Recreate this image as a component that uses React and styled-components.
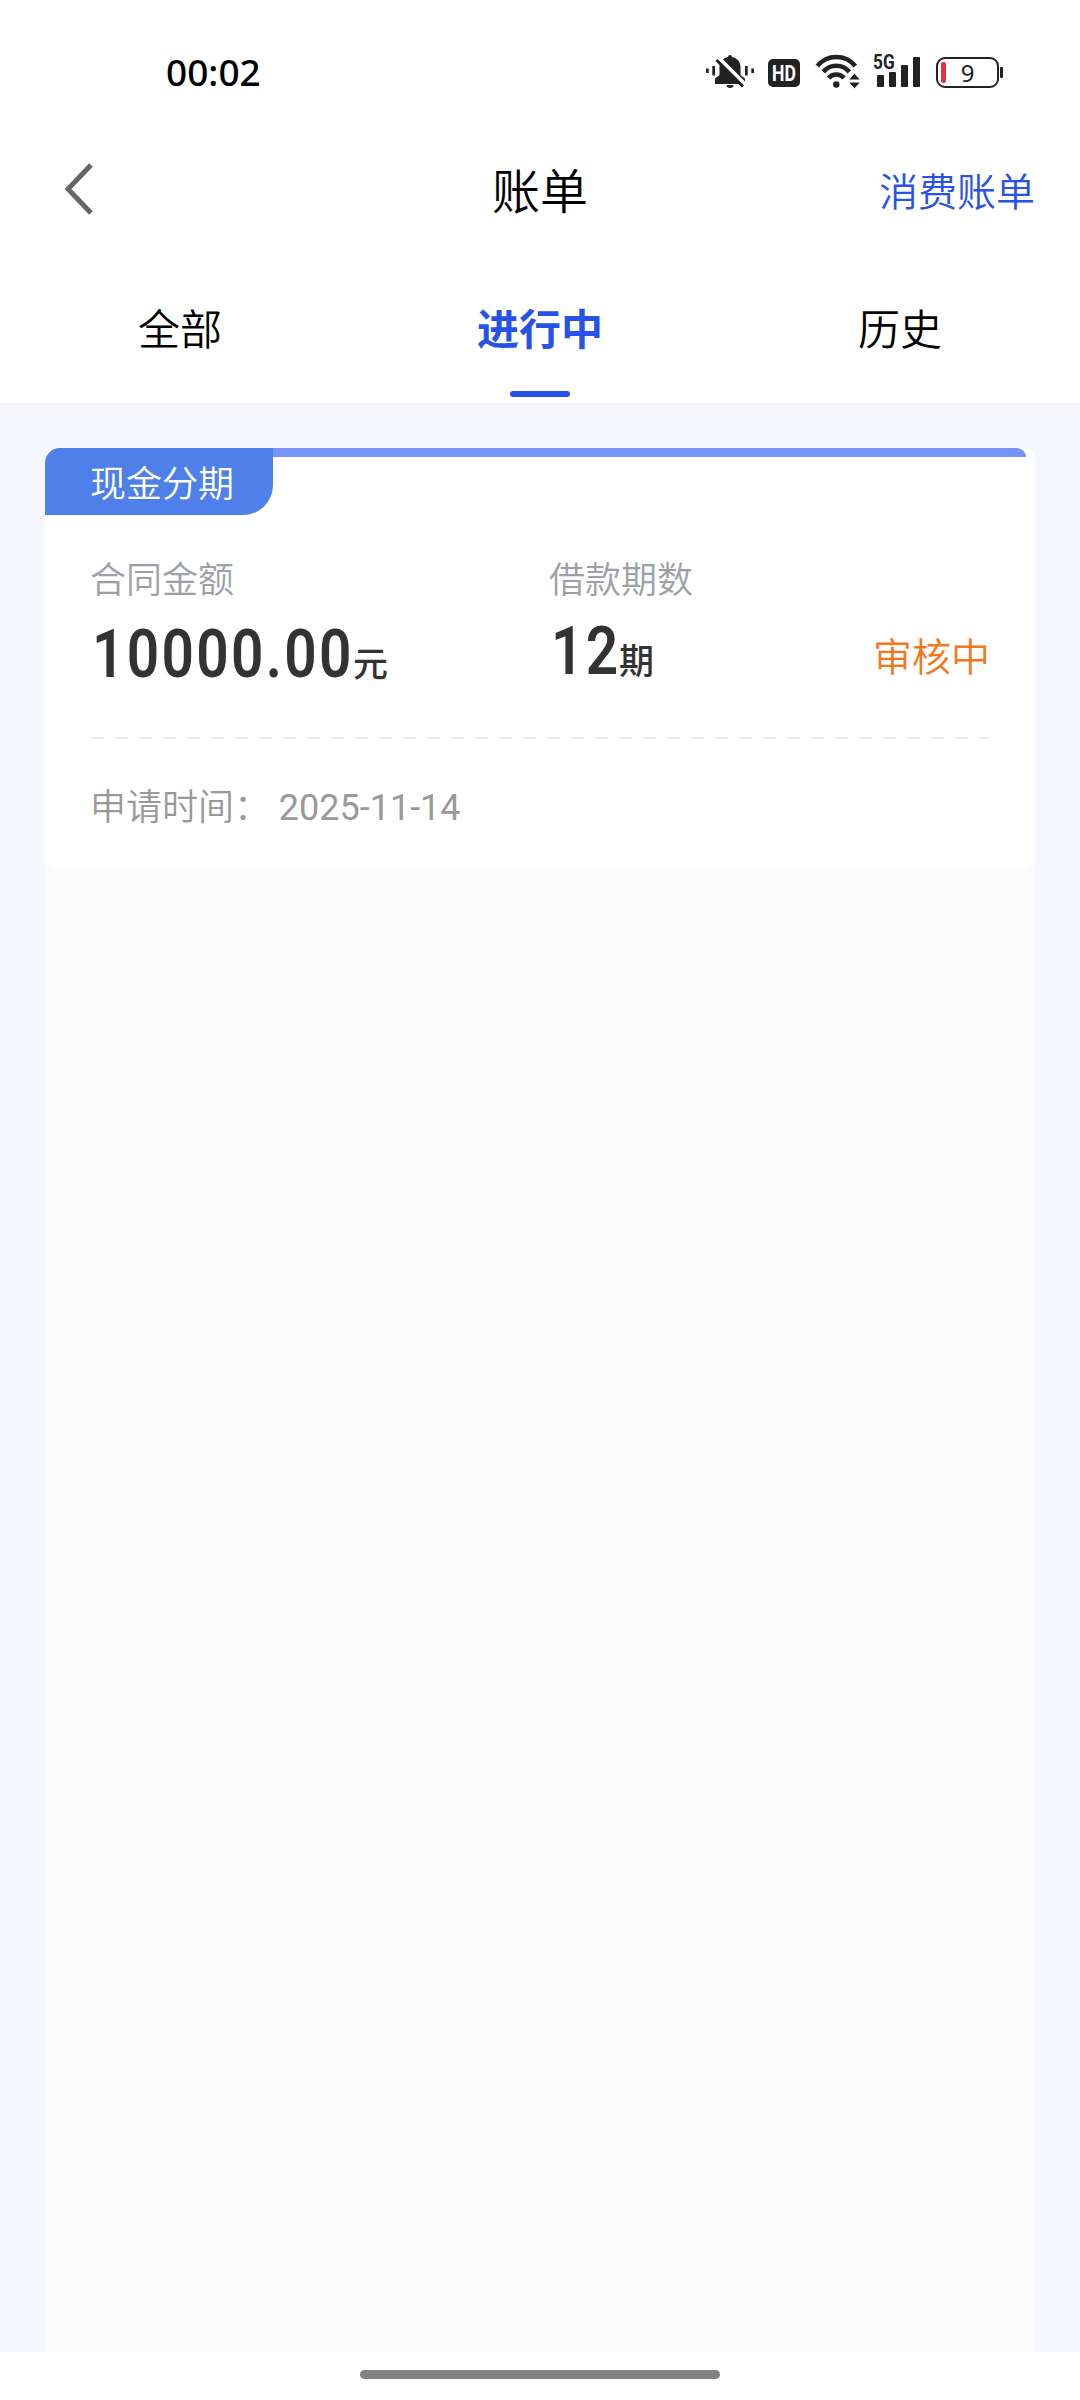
import styled, {createGlobalStyle} from "styled-components";

const tabs = ["全部", "进行中", "历史"];

const bills = [
  {
    type: "现金分期",
    amount: "10000.00",
    periods: "12",
    status: "审核中",
    date: "2025-11-14",
  },
];

function BellOffIcon() {
  return (
    <svg width="48" height="36" viewBox="0 0 48 36" fill="#222">
      <rect x="0" y="14.500" width="2.700" height="4.500" />
      <rect x="6.300" y="12" width="2.700" height="9.500" />
      <rect x="39" y="12" width="2.700" height="9.500" />
      <rect x="45.300" y="14.500" width="2.700" height="4.500" />
      <path d="M22 3a2 2 0 0 1 4 0c5 1 8.500 4.500 8.500 10v8l4.500 3.500V30H9v-5.500l4.500-3.500v-8c0-5.500 3.500-9 8.500-10z" />
      <path d="M20.500 31h7a3.500 3 0 0 1-7 0z" />
      <path d="M12 4l28 28" stroke="#fff" strokeWidth="5" fill="none" />
      <path d="M10.500 6l26.500 26.500" stroke="#222" strokeWidth="3" fill="none" />
    </svg>
  );
}

function WifiIcon() {
  return (
    <svg width="44" height="36" viewBox="0 0 44 36">
      <g fill="none" stroke="#222" strokeWidth="4.500">
        <path d="M2.300 12a24.600 24.600 0 0 1 38 0" />
        <path d="M8.300 18a16.500 16.500 0 0 1 26 0" />
        <path d="M13.500 24a10.300 10.300 0 0 1 15.600 0" />
      </g>
      <circle cx="21.300" cy="30.500" r="3.200" fill="#222" />
      <path
        d="M39.500 19l6 7h-12zM39.500 35l6-7h-12z"
        fill="#222"
        stroke="#fff"
        strokeWidth="1"
      />
    </svg>
  );
}

function BackIcon() {
  return (
    <svg width="30" height="52" viewBox="0 0 30 52">
      <path
        d="M27 2L4 26l23 24"
        fill="none"
        stroke="#666"
        strokeWidth="5"
      />
    </svg>
  );
}

export default function App() {
  return (
    <>
      <GlobalStyle />
      <Page lang="zh-CN">
        <StatusBar>
          <Clock>00:02</Clock>
          <StatusIcons>
            <BellOffIcon />
            <HdBadge>
              <span>HD</span>
            </HdBadge>
            <WifiIcon />
            <Signal>
              <SignalLabel>5G</SignalLabel>
              <SignalBar $height={12} />
              <SignalBar $height={15} />
              <SignalBar $height={22} />
              <SignalBar $height={30} />
            </Signal>
            <Battery>
              <BatteryBody>
                <BatteryLevel />
                <BatteryText>9</BatteryText>
              </BatteryBody>
              <BatteryTip />
            </Battery>
          </StatusIcons>
        </StatusBar>
        <NavBar>
          <BackButton aria-label="back">
            <BackIcon />
          </BackButton>
          <Title>账单</Title>
          <NavLink>消费账单</NavLink>
        </NavBar>
        <Tabs>
          {tabs.map((tab, i) => (
            <Tab key={tab} $active={i === 1}>
              {tab}
            </Tab>
          ))}
        </Tabs>
        <Content>
          <List>
            {bills.map(bill => (
              <Card key={bill.date}>
                <CardTop>
                  <Tag>{bill.type}</Tag>
                  <TopLine />
                </CardTop>
                <Summary>
                  <Field $width={459}>
                    <Label>合同金额</Label>
                    <Value>
                      <Digits $width={263}>
                        <span>{bill.amount}</span>
                      </Digits>
                      <Unit>元</Unit>
                    </Value>
                  </Field>
                  <Field>
                    <Label>借款期数</Label>
                    <Value $raised>
                      <Digits $width={70}>
                        <span>{bill.periods}</span>
                      </Digits>
                      <Unit>期</Unit>
                    </Value>
                  </Field>
                  <Status>{bill.status}</Status>
                </Summary>
                <Divider />
                <Footer>
                  申请时间： <time>{bill.date}</time>
                </Footer>
              </Card>
            ))}
          </List>
        </Content>
        <GestureBar>
          <GesturePill />
        </GestureBar>
      </Page>
    </>
  );
}

const GlobalStyle = createGlobalStyle`
  * {
    box-sizing: border-box;
  }
  body {
    margin: 0;
    background-color: #fff;
    font-family: Roboto, "Noto Sans CJK SC", sans-serif;
    font-weight: 350;
  }
`;

const Page = styled.div`
  display: flex;
  flex-direction: column;
  width: 1080px;
  height: 2400px;
  overflow: hidden;
`;

const StatusBar = styled.div`
  display: flex;
  justify-content: space-between;
  align-items: center;
  height: 144px;
  padding: 0 77px 0 166px;
`;

const Clock = styled.span`
  padding-bottom: 2px;
  font-family: "Noto Sans", sans-serif;
  font-size: 37px;
  font-weight: 460;
  color: #000;
`;

const StatusIcons = styled.div`
  display: flex;
  align-items: center;

  svg {
    overflow: visible;
  }
`;

const HdBadge = styled.span`
  display: flex;
  align-items: center;
  justify-content: center;
  width: 32px;
  height: 28px;
  margin: 2px 15px 0 14px;
  border-radius: 5px;
  background-color: #222;
  color: #fff;
  font-size: 22px;
  font-weight: 700;

  span {
    transform: scaleX(0.8);
  }
`;

const Signal = styled.div`
  position: relative;
  display: flex;
  align-items: flex-end;
  gap: 5px;
  height: 34px;
  margin-left: 18px;
  padding-bottom: 2px;
`;

const SignalLabel = styled.span`
  position: absolute;
  top: -4px;
  left: -4px;
  font-size: 21px;
  line-height: 22px;
  font-weight: 700;
  color: #222;
  transform: scaleX(0.82);
  transform-origin: left;
`;

const SignalBar = styled.span`
  width: 7px;
  height: ${props => props.$height}px;
  border-radius: 1px;
  background-color: #222;
`;

const Battery = styled.div`
  display: flex;
  align-items: center;
  gap: 1px;
  margin-left: 16px;
`;

const BatteryBody = styled.div`
  display: flex;
  align-items: center;
  width: 63px;
  height: 31px;
  padding-left: 3px;
  border: 2.5px solid #222;
  border-radius: 9px;
`;

const BatteryLevel = styled.span`
  width: 5px;
  height: 21px;
  border-radius: 2px;
  background-color: #dc3545;
`;

const BatteryText = styled.span`
  flex: 1;
  padding-right: 8px;
  font-family: "Noto Sans", sans-serif;
  font-size: 24px;
  line-height: 27px;
  font-weight: 400;
  text-align: center;
  color: #222;
`;

const BatteryTip = styled.span`
  width: 3px;
  height: 11px;
  border-radius: 1px;
  background-color: #222;
`;

const NavBar = styled.header`
  display: grid;
  grid-template-columns: 1fr auto 1fr;
  align-items: center;
  height: 96px;
  padding: 0 45px 8px;
`;

const BackButton = styled.button`
  display: flex;
  justify-self: start;
  padding: 2px 0 0 19px;
  border: none;
  background-color: transparent;
`;

const Title = styled.h1`
  margin: 0;
  font-size: 48px;
  font-weight: 350;
  color: #000;
`;

const NavLink = styled.a`
  justify-self: end;
  padding-top: 2px;
  font-size: 39px;
  color: #2752e7;
`;

const Tabs = styled.nav`
  display: flex;
  height: 163px;
`;

const Tab = styled.button`
  position: relative;
  flex: 1;
  padding: 10px 0 0;
  border: none;
  background-color: transparent;
  font-family: inherit;
  font-size: 42px;
  font-weight: ${props => (props.$active ? 700 : 350)};
  color: ${props => (props.$active ? "#2752e7" : "#000")};

  &::after {
    content: "";
    display: ${props => (props.$active ? "block" : "none")};
    position: absolute;
    left: 150px;
    bottom: 6px;
    width: 60px;
    height: 6px;
    border-radius: 3px;
    background-color: #2752e7;
  }
`;

const Content = styled.main`
  flex: 1;
  padding: 45px 45px 0;
  background-color: #f5f7fc;
`;

const List = styled.div`
  height: 100%;
  background-color: #fbfbfb;
  border-radius: 12px 12px 0 0;
`;

const Card = styled.article`
  height: 420px;
  border-radius: 12px;
  background-color: #fff;
`;

const CardTop = styled.div`
  display: flex;
  height: 67px;
  padding-right: 9px;
`;

const Tag = styled.span`
  width: 228px;
  padding: 4px 0 0 45px;
  border-radius: 15px 0 30px 0;
  background-color: #4f7fe9;
  font-size: 36px;
  line-height: 67px;
  color: #fff;
`;

const TopLine = styled.div`
  flex: 1;
  height: 9px;
  border-top-right-radius: 9px;
  background-color: #7594fb;
`;

const Summary = styled.div`
  display: flex;
  height: 222px;
  padding: 40px 45px 0;
`;

const Field = styled.div`
  width: ${props => (props.$width ? props.$width + "px" : "auto")};
`;

const Label = styled.div`
  font-size: 36px;
  line-height: 52px;
  color: #9ca0a6;
`;

const Value = styled.div`
  display: flex;
  align-items: baseline;
  height: 72px;
  margin-top: ${props => (props.$raised ? 9 : 12)}px;
  line-height: 72px;
  color: #333;
`;

const Digits = styled.span`
  width: ${props => props.$width}px;
  padding-left: 2px;
  font-size: 66px;
  font-weight: 600;

  span {
    display: inline-block;
    letter-spacing: 2.7px;
    transform: scaleX(0.86);
    transform-origin: left;
  }
`;

const Unit = styled.span`
  font-size: 35px;
  font-weight: 500;
`;

const Status = styled.div`
  margin: 73px 0 0 auto;
  font-size: 39px;
  line-height: 60px;
  color: #f5771b;
`;

const Divider = styled.hr`
  height: 2px;
  margin: 0 46px;
  border: none;
  background-image: repeating-linear-gradient(
    to right,
    #ebebeb 0 12px,
    transparent 12px 24px
  );
`;

const Footer = styled.div`
  padding: 43px 45px 0;
  font-size: 36px;
  line-height: 52px;
  color: #999;

  time {
    font-weight: 400;
  }
`;

const GestureBar = styled.div`
  display: flex;
  justify-content: center;
  height: 48px;
  padding-top: 18px;
  background-color: #fff;
`;

const GesturePill = styled.div`
  width: 360px;
  height: 9px;
  border-radius: 5px;
  background-color: #808080;
`;
